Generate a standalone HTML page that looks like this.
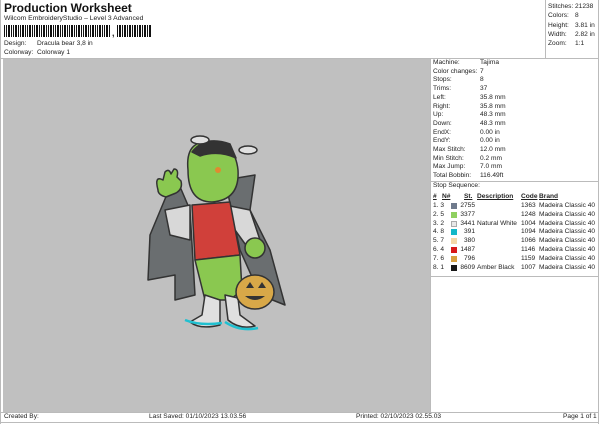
<!DOCTYPE html>
<html><head><meta charset="utf-8"><style>
*{margin:0;padding:0;box-sizing:border-box}
body{width:600px;height:424px;background:#fff;font-family:"Liberation Sans",sans-serif;color:#222;position:relative;overflow:hidden;font-size:6.6px;line-height:8px}
.a{position:absolute;white-space:nowrap}
.ln{position:absolute;background:#bbb}
</style></head><body>
<div class="a" style="left:4px;top:1px;font-size:12px;line-height:14px;font-weight:bold;color:#111">Production Worksheet</div>
<div class="a" style="left:4px;top:15px;font-size:6.8px">Wilcom EmbroideryStudio – Level 3 Advanced</div>
<div class="a" style="left:4px;top:25px;width:107px;height:12px;background:repeating-linear-gradient(90deg,#111 0 1px,#fff 1px 2px,#111 2px 3px,#fff 3px 4px,#111 4px 6px,#fff 6px 7px)"></div>
<div class="a" style="left:112px;top:29px;font-weight:bold;font-size:9px">,</div>
<div class="a" style="left:117px;top:25px;width:34px;height:12px;background:repeating-linear-gradient(90deg,#111 0 1px,#fff 1px 2px,#111 2px 4px,#fff 4px 5px)"></div>
<div class="a" style="left:4px;top:40px">Design:</div><div class="a" style="left:37px;top:40px">Dracula bear 3,8 in</div>
<div class="a" style="left:4px;top:49px">Colorway:</div><div class="a" style="left:37px;top:49px">Colorway 1</div>
<div class="ln" style="left:0;top:0;width:1px;height:424px"></div>
<div class="ln" style="left:598px;top:0;width:1px;height:424px"></div>
<div class="ln" style="left:0;top:58px;width:599px;height:1px"></div>
<div class="ln" style="left:545px;top:0;width:1px;height:58px"></div>
<div class="a" style="left:548px;top:2px;line-height:9.3px">Stitches:<br>Colors:<br>Height:<br>Width:<br>Zoom:</div>
<div class="a" style="left:575px;top:2px;line-height:9.3px">21238<br>8<br>3.81 in<br>2.82 in<br>1:1</div>
<div class="a" style="left:3px;top:59px;width:427px;height:353px;background:#c0c0c0"></div>
<div class="a" style="left:433px;top:59px;line-height:8.7px">Machine:<br>Color changes:<br>Stops:<br>Trims:<br>Left:<br>Right:<br>Up:<br>Down:<br>EndX:<br>EndY:<br>Max Stitch:<br>Min Stitch:<br>Max Jump:<br>Total Bobbin:</div>
<div class="a" style="left:480px;top:59px;line-height:8.7px">Tajima<br>7<br>8<br>37<br>35.8 mm<br>35.8 mm<br>48.3 mm<br>48.3 mm<br>0.00 in<br>0.00 in<br>12.0 mm<br>0.2 mm<br>7.0 mm<br>116.49ft</div>
<div class="ln" style="left:431px;top:181px;width:167px;height:1px"></div>
<div class="a" style="left:433px;top:182px">Stop Sequence:</div>
<div class="a" style="left:433px;top:193px;font-weight:bold;text-decoration:underline">#</div>
<div class="a" style="left:442px;top:193px;font-weight:bold;text-decoration:underline">N#</div>
<div class="a" style="left:464px;top:193px;font-weight:bold;text-decoration:underline">St.</div>
<div class="a" style="left:477px;top:193px;font-weight:bold;text-decoration:underline">Description</div>
<div class="a" style="left:521px;top:193px;font-weight:bold;text-decoration:underline">Code</div>
<div class="a" style="left:539px;top:193px;font-weight:bold;text-decoration:underline">Brand</div>
<div class="a" style="left:433px;top:202px;line-height:8.8px">1. 3<br>2. 5<br>3. 2<br>4. 8<br>5. 7<br>6. 4<br>7. 6<br>8. 1</div>
<div class="a" style="left:451px;top:203px;width:6px;height:6px;background:#6f7a8c"></div>
<div class="a" style="left:451px;top:212px;width:6px;height:6px;background:#8fd060"></div>
<div class="a" style="left:451px;top:221px;width:6px;height:6px;background:#e8e8e8;border:1px solid #aaa"></div>
<div class="a" style="left:451px;top:229px;width:6px;height:6px;background:#14b8c8"></div>
<div class="a" style="left:451px;top:238px;width:6px;height:6px;background:#f4d8a8"></div>
<div class="a" style="left:451px;top:247px;width:6px;height:6px;background:#d81818"></div>
<div class="a" style="left:451px;top:256px;width:6px;height:6px;background:#d8a040"></div>
<div class="a" style="left:451px;top:265px;width:6px;height:6px;background:#181818"></div>
<div class="a" style="left:458px;top:202px;line-height:8.8px;text-align:right;width:17px">2755<br>3377<br>3441<br>391<br>380<br>1487<br>796<br>8609</div>
<div class="a" style="left:477px;top:202px;line-height:8.8px"><br><br>Natural White<br><br><br><br><br>Amber Black</div>
<div class="a" style="left:521px;top:202px;line-height:8.8px">1363<br>1248<br>1004<br>1094<br>1066<br>1146<br>1159<br>1007</div>
<div class="a" style="left:539px;top:202px;line-height:8.8px">Madeira Classic 40<br>Madeira Classic 40<br>Madeira Classic 40<br>Madeira Classic 40<br>Madeira Classic 40<br>Madeira Classic 40<br>Madeira Classic 40<br>Madeira Classic 40</div>
<div class="ln" style="left:431px;top:276px;width:167px;height:1px"></div>
<div class="ln" style="left:430px;top:59px;width:1px;height:353px"></div>
<div class="ln" style="left:0;top:412px;width:599px;height:1px"></div>
<div class="ln" style="left:0;top:422px;width:599px;height:1px"></div>
<div class="a" style="left:4px;top:413px">Created By:</div>
<div class="a" style="left:149px;top:413px">Last Saved: 01/10/2023 13.03.56</div>
<div class="a" style="left:356px;top:413px">Printed: 02/10/2023 02.55.03</div>
<div class="a" style="left:563px;top:413px">Page 1 of 1</div>
<svg class="a" style="left:130px;top:130px" width="160" height="230" viewBox="0 0 160 230">
<g stroke="#333" stroke-width="1.5" stroke-linejoin="round">
<path d="M45 45 L20 105 L18 150 L45 145 L45 170 L65 165 L60 80 Z" fill="#6a6e70"/>
<path d="M95 50 L125 45 L120 80 L140 120 L155 175 L130 165 L110 120 Z" fill="#6a6e70"/>
<path d="M35 80 L60 75 L60 110 L40 105 Z" fill="#d8d8d8"/>
<path d="M95 75 L120 80 L130 110 L118 118 L105 100 Z" fill="#d8d8d8"/>
<path d="M28 60 q-4 -15 5 -10 l2 -8 q4 -4 6 2 l3 -5 q5 0 3 8 l4 4 q2 8 -5 12 l-10 4 q-8 -2 -8 -7 Z" fill="#8ac850"/>
<path d="M62 75 L100 72 L110 125 L65 130 Z" fill="#d0403a"/>
<path d="M65 130 L110 125 L112 160 L100 170 L75 170 Z" fill="#8ac850"/>
<circle cx="125" cy="118" r="10" fill="#8ac850"/>
<path d="M75 165 L72 185 L60 192 Q70 200 90 195 L90 170 Z" fill="#e0e0e0"/>
<path d="M95 165 L98 190 Q110 200 125 196 L110 185 L108 168 Z" fill="#e0e0e0"/>
<path d="M55 190 Q70 196 92 193" stroke="#20c0d0" stroke-width="2.5" fill="none"/>
<path d="M95 192 Q110 202 128 198" stroke="#20c0d0" stroke-width="2.5" fill="none"/>
<ellipse cx="125" cy="162" rx="19" ry="17" fill="#d8a848"/>
<path d="M58 40 Q55 10 80 12 Q105 12 108 40 Q110 70 82 72 Q58 72 58 40 Z" fill="#8ac850"/>
<path d="M62 22 Q75 5 100 14 L106 28 Q88 20 70 26 Z" fill="#333"/>
<ellipse cx="70" cy="10" rx="9" ry="4" fill="#e0e0e0"/>
<ellipse cx="118" cy="20" rx="9" ry="4" fill="#e0e0e0"/>
</g>
<circle cx="88" cy="40" r="3" fill="#e08a30"/>
<path d="M116 158 l4 -6 l4 6 Z M128 158 l4 -6 l4 6 Z M115 166 q10 8 20 0 Z" fill="#333"/>
</svg>
</body></html>
